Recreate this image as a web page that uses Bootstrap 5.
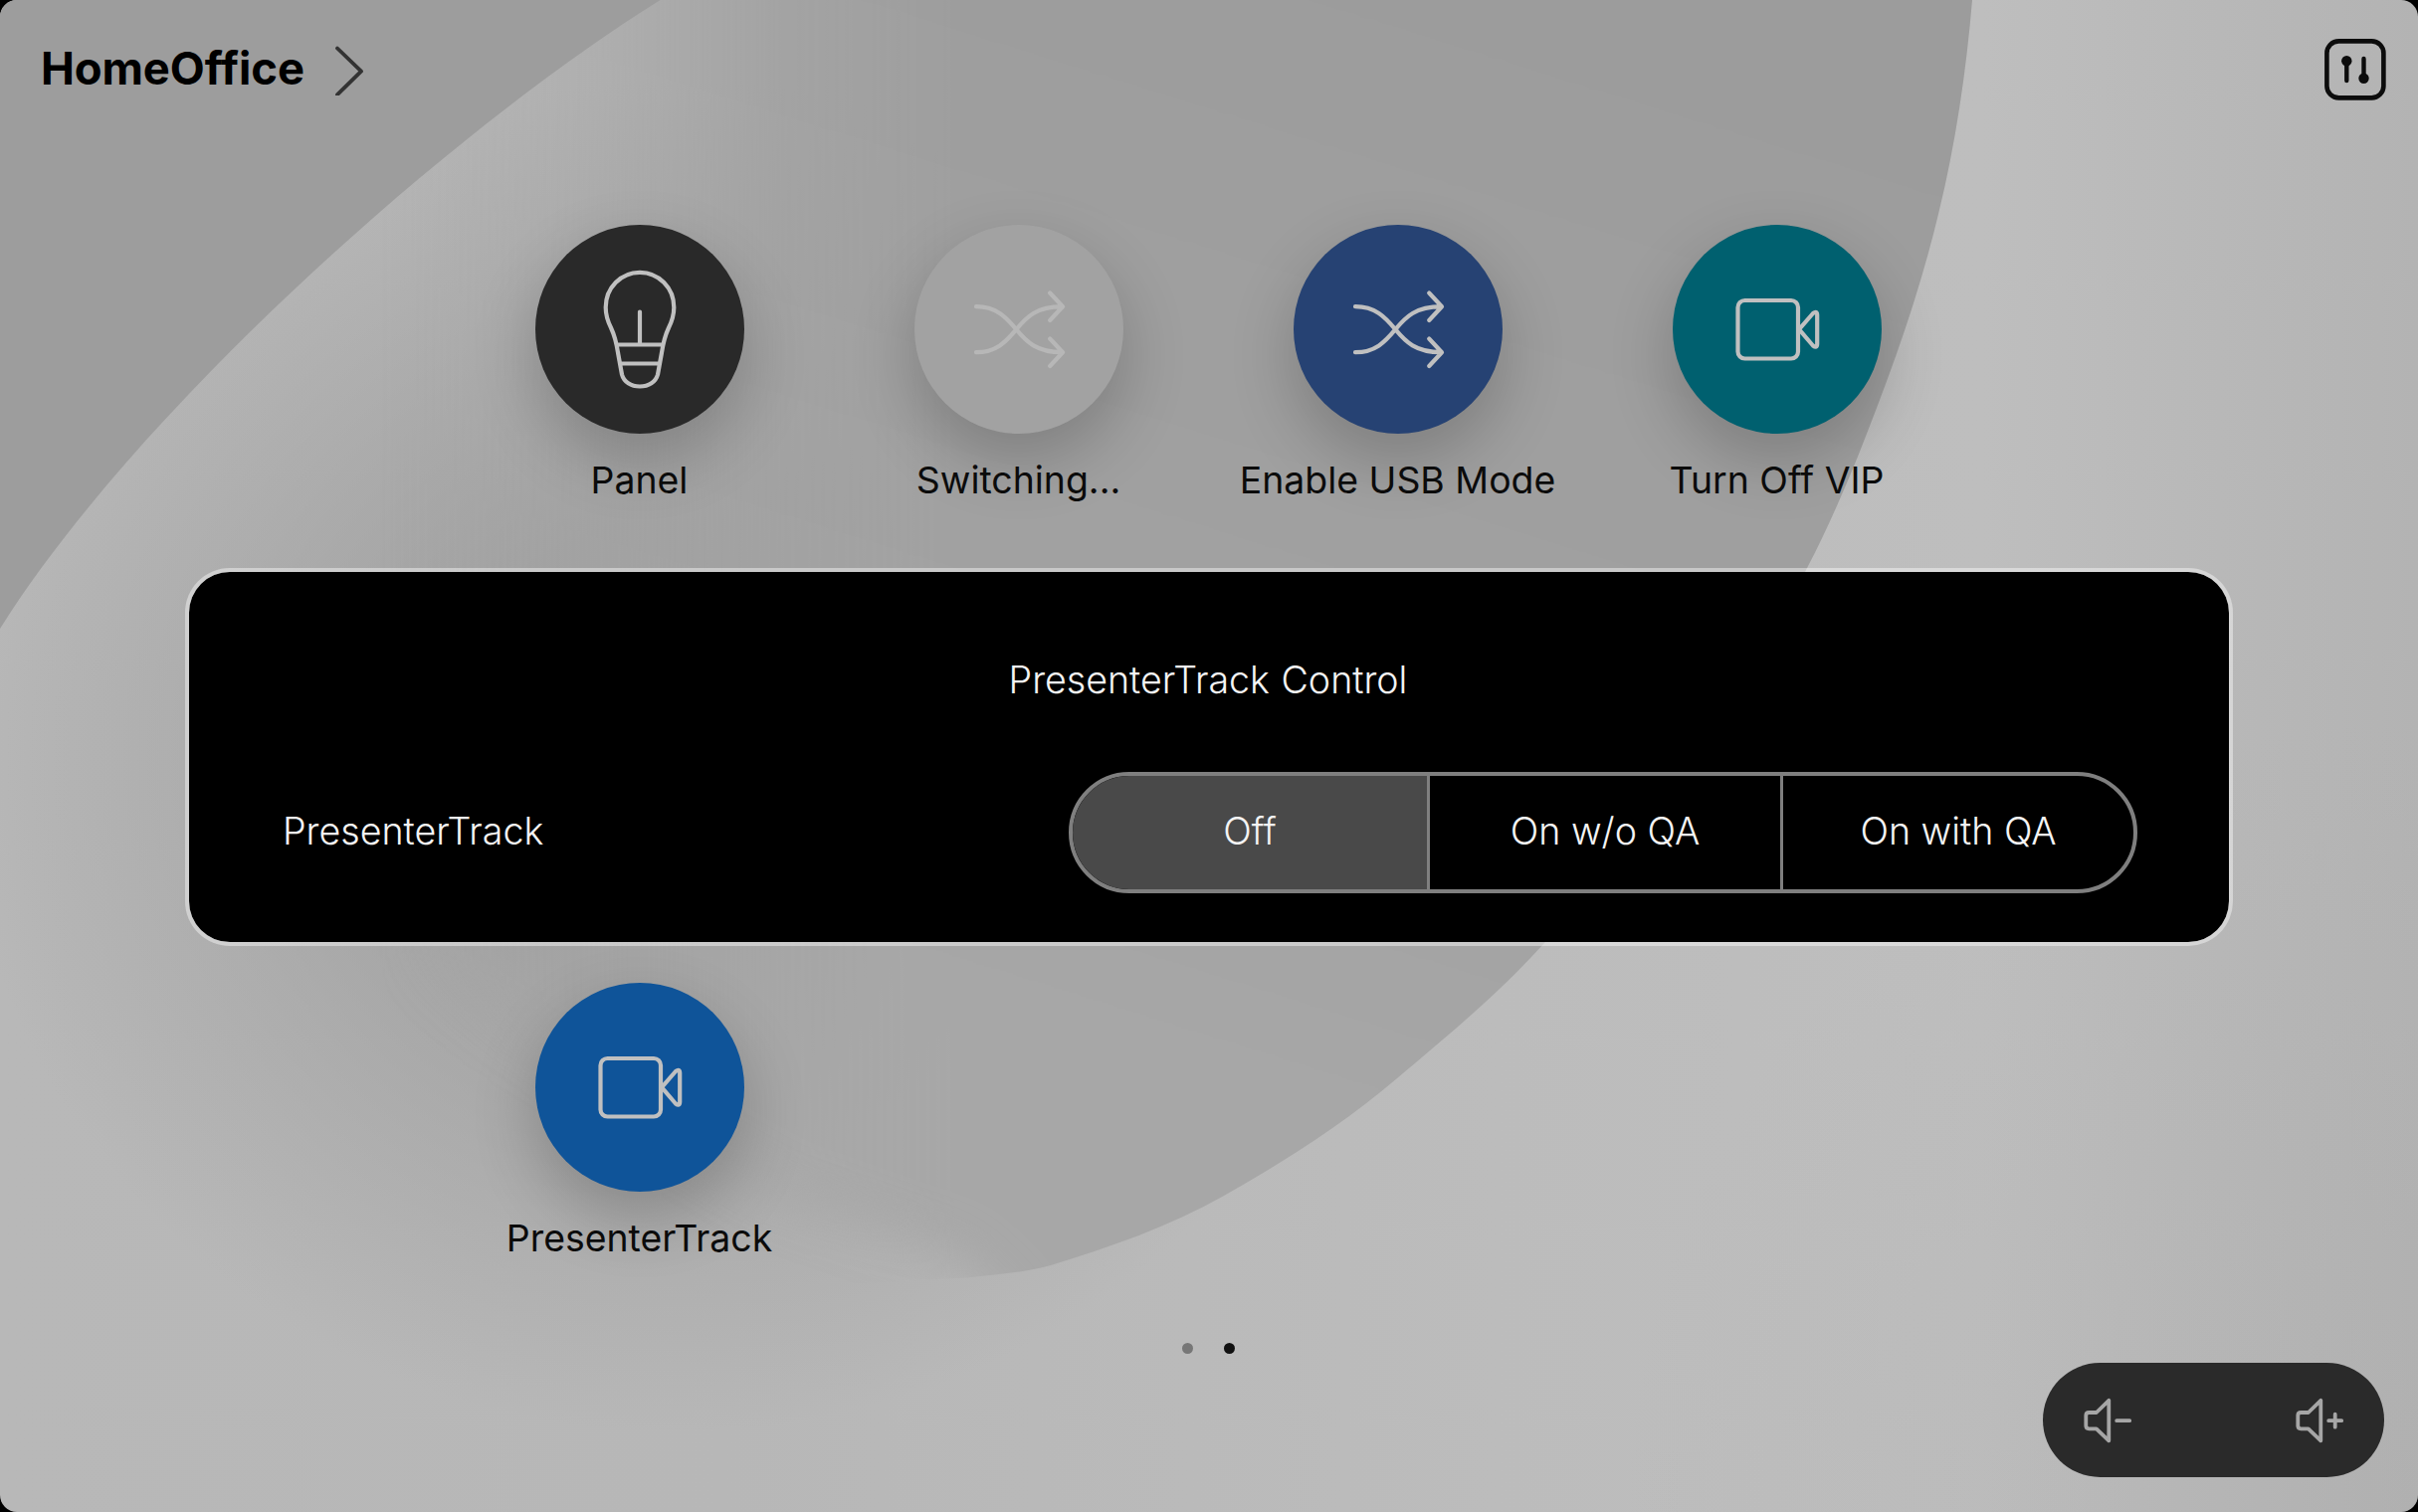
<!DOCTYPE html>
<html lang="en">
<head>
<meta charset="utf-8">
<meta name="viewport" content="width=device-width, initial-scale=1">
<title>HomeOffice</title>
<link href="https://cdn.jsdelivr.net/npm/bootstrap@5.3.0/dist/css/bootstrap.min.css" rel="stylesheet">
<style>
  html, body { height: 100%; margin: 0; background: #000; overflow: hidden; }
  body { font-family: Inter, "Liberation Sans", sans-serif; font-size: 37.6px; line-height: 46px; color: #0b0b0b; }
  .screen { width: 2430px; height: 1520px; border-radius: 17px; }
  .wallpaper { inset: 0; z-index: 0; }
  .topbar { height: 226px; padding: 39px 32px 0 41px; z-index: 1; }
  .room-name { font-size: 45.4px; line-height: 60px; font-weight: 700; color: #000; letter-spacing: -.1px; }
  .room-link { gap: 30px; }
  .apps { display: grid; grid-template-columns: repeat(4, 381px); grid-template-rows: repeat(3, 381px); height: 1124px; padding-right: 2px; z-index: 1; }
  .app-disc { width: 210px; height: 210px; box-shadow: 0 26px 64px 2px rgba(0, 0, 0, .2); color: #c0c0c0; }
  .app-label { margin-top: 24px; white-space: nowrap; font-size: 37.4px; }
  .last-row { grid-row: 3; }
  .disc-panel { background: #292929; }
  .disc-switching { background: #a2a2a2; color: #b7b7b7; }
  .disc-usb { background: #264273; }
  .disc-vip { background: #00606f; }
  .disc-track { background: #0f5499; }
  .stroke-icon { fill: none; stroke: currentColor; stroke-linecap: round; stroke-linejoin: round; display: block; }
  .pager { gap: 31px; padding-right: 2px; z-index: 1; }
  .pager-dot { width: 11px; height: 11px; background: #777; }
  .pager-dot.current { background: #111; }
  .control-panel { left: 186px; top: 571px; width: 2058px; height: 380px; padding: 86px 92px 0 94px;
    background: #000; background-clip: padding-box; border: 4px solid rgba(255, 255, 255, .42); border-radius: 45px;
    color: #f4f4f4; font-weight: 300; word-spacing: 1px; z-index: 3; }
  .control-title { padding-right: 4px; }
  .control-row { margin-top: 69px; }
  .control-name { padding-bottom: 3px; }
  .segments { width: 1074px; height: 122px; border: 4px solid #7f7f7f; border-radius: 61px; overflow: hidden; }
  .segments .btn { font-family: inherit; font-size: inherit; line-height: inherit; font-weight: 300; color: #f4f4f4;
    border: 0; border-radius: 0; padding: 0 0 3px; flex: 0 0 355px; margin-left: 0 !important; background: transparent; }
  .segments .btn + .btn { border-left: 3px solid #7f7f7f; }
  .segments .btn.active { background: #494949; color: #f4f4f4; flex-basis: 356px; }
  .volume { right: 34px; bottom: 35px; width: 343px; height: 115px; background: #2a2a2a; color: #a6a6a6; z-index: 2; padding: 0 39px; }
</style>
</head>
<body>
<div class="screen position-relative overflow-hidden d-flex flex-column">

  <svg class="wallpaper position-absolute" width="2430" height="1520" viewBox="0 0 2430 1520" aria-hidden="true">
    <defs>
      <linearGradient id="light" x1="0" y1="0" x2="2430" y2="0" gradientUnits="userSpaceOnUse">
        <stop offset="0" stop-color="#b8b8b8"/>
        <stop offset=".3" stop-color="#b7b7b7"/>
        <stop offset=".62" stop-color="#bcbcbc"/>
        <stop offset=".82" stop-color="#bebebe"/>
        <stop offset="1" stop-color="#b3b3b3"/>
      </linearGradient>
      <linearGradient id="inner" x1="1500" y1="0" x2="1100" y2="1280" gradientUnits="userSpaceOnUse">
        <stop offset="0" stop-color="#9c9c9c"/>
        <stop offset=".5" stop-color="#a1a1a1"/>
        <stop offset=".85" stop-color="#a7a7a7"/>
        <stop offset="1" stop-color="#a7a7a7"/>
      </linearGradient>
      <radialGradient id="shade" cx="0" cy="0" r="1" gradientUnits="userSpaceOnUse" gradientTransform="translate(680 760) scale(720 680)">
        <stop offset="0" stop-color="#9a9a9a" stop-opacity=".85"/>
        <stop offset=".35" stop-color="#9a9a9a" stop-opacity=".7"/>
        <stop offset=".7" stop-color="#9a9a9a" stop-opacity=".32"/>
        <stop offset="1" stop-color="#9a9a9a" stop-opacity="0"/>
      </radialGradient>
      <radialGradient id="corner" cx="2430" cy="1520" r="800" gradientUnits="userSpaceOnUse">
        <stop offset="0" stop-color="#a8a8a8" stop-opacity=".25"/>
        <stop offset="1" stop-color="#a8a8a8" stop-opacity="0"/>
      </radialGradient>
      <linearGradient id="ramp" x1="380" y1="0" x2="960" y2="0" gradientUnits="userSpaceOnUse">
        <stop offset="0" stop-color="#fff" stop-opacity="0"/>
        <stop offset=".35" stop-color="#fff" stop-opacity=".3"/>
        <stop offset=".7" stop-color="#fff" stop-opacity=".8"/>
        <stop offset="1" stop-color="#fff"/>
      </linearGradient>
      <mask id="rampMask" maskUnits="userSpaceOnUse" x="0" y="0" width="2430" height="1520"><rect width="2430" height="1520" fill="url(#ramp)"/></mask>
      <filter id="tight" filterUnits="userSpaceOnUse" x="0" y="-300" width="2800" height="1900"><feGaussianBlur stdDeviation="24"/></filter>
      <clipPath id="petal">
        <path d="M1982 0C1976 72 1965 145 1949 211C1928 300 1899 378 1867 459C1851 498 1835 535 1815 573C1750 700 1660 823 1552 948C1505 1000 1456 1040 1404 1084C1350 1130 1295 1165 1230 1202C1175 1233 1115 1254 1056 1272C1030 1279 1003 1281 977 1284L700 1300L0 1400L0 0Z"/>
      </clipPath>
    </defs>
    <rect width="2430" height="1520" fill="url(#light)"/>
    <rect width="2430" height="1520" fill="url(#corner)"/>
    <rect width="2430" height="1520" fill="url(#shade)"/>
    <g clip-path="url(#petal)">
      <g mask="url(#rampMask)">
        <path d="M200 -200H2600V1520H1100L1010 1310L960 1262L880 1235L780 1200L640 1120L200 850Z" fill="url(#inner)" filter="url(#tight)"/>
      </g>
    </g>
    <path d="M663.5 0C440 140 132 421 0 632V0Z" fill="#9d9d9d"/>
  </svg>

  <header class="topbar position-relative d-flex align-items-start justify-content-between">
    <div class="room-link d-flex align-items-center">
      <div class="room-name">HomeOffice</div>
      <svg class="stroke-icon" width="30" height="54" viewBox="0 0 30 54" stroke-width="3.8" style="color:#333"><path d="M3 6.500l24 23.200L3 53.200"/></svg>
    </div>
    <svg width="62" height="62" viewBox="0 0 62 62" fill="none" stroke="#0c0c0c" stroke-linecap="round">
      <rect x="2.4" y="2.4" width="57" height="57" rx="12" stroke-width="4.6"/>
      <path d="M22.300 24v18M39.500 20v18" stroke-width="4.4"/>
      <circle cx="22.3" cy="22.3" r="5.2" fill="#0c0c0c" stroke="none"/>
      <circle cx="39.5" cy="39.8" r="5.2" fill="#0c0c0c" stroke="none"/>
    </svg>
  </header>

  <main class="apps position-relative justify-content-center">
    <div class="d-flex flex-column align-items-center">
      <div class="app-disc disc-panel rounded-circle">
        <svg class="stroke-icon" width="210" height="210" viewBox="0 0 210 210" stroke-width="4.2"><path d="M105 47.800c-19 0-34.300 15.500-34.300 35.200c0 8 2.300 14.500 5.300 20.500c4 8.500 5.500 15 7 25l4 22c2 7.500 9 12 18 12s16-4.500 18-12l4-22c1.500-10 3-16.500 7-25c3-6 5.300-12.500 5.300-20.500c0-19.700-15.300-35.200-34.300-35.200z M105 87.500v32.500M82 120.500h46M86 139.500h38"/></svg>
      </div>
      <div class="app-label">Panel</div>
    </div>
    <div class="d-flex flex-column align-items-center">
      <div class="app-disc disc-switching rounded-circle">
        <svg class="stroke-icon" width="210" height="210" viewBox="0 0 210 210" stroke-width="4.2"><path d="M62 82.200c20 0 30 10.500 40.300 23s20.500 23 46 23M62 128.200c20 0 30-10.500 40.300-23s20.500-23 46-23M136.200 68.500l12.800 13.700l-12.800 13.800M136.200 114.500l12.800 13.700l-12.800 13.800"/></svg>
      </div>
      <div class="app-label">Switching...</div>
    </div>
    <div class="d-flex flex-column align-items-center">
      <div class="app-disc disc-usb rounded-circle">
        <svg class="stroke-icon" width="210" height="210" viewBox="0 0 210 210" stroke-width="4.2"><path d="M62 82.200c20 0 30 10.500 40.300 23s20.500 23 46 23M62 128.200c20 0 30-10.500 40.300-23s20.500-23 46-23M136.200 68.500l12.800 13.700l-12.800 13.800M136.200 114.500l12.800 13.700l-12.800 13.800"/></svg>
      </div>
      <div class="app-label">Enable USB Mode</div>
    </div>
    <div class="d-flex flex-column align-items-center">
      <div class="app-disc disc-vip rounded-circle">
        <svg class="stroke-icon" width="210" height="210" viewBox="0 0 210 210" stroke-width="4.2"><rect x="65.500" y="76" width="60.500" height="58.500" rx="7"/><path d="M127 105.200l14-16.200q4-3 4.200 1.500v29.500q-.2 4.500-4.200 1.500z"/></svg>
      </div>
      <div class="app-label">Turn Off VIP</div>
    </div>
    <div class="last-row d-flex flex-column align-items-center">
      <div class="app-disc disc-track rounded-circle">
        <svg class="stroke-icon" width="210" height="210" viewBox="0 0 210 210" stroke-width="4.2"><rect x="65.500" y="76" width="60.500" height="58.500" rx="7"/><path d="M127 105.200l14-16.200q4-3 4.200 1.500v29.500q-.2 4.500-4.200 1.500z"/></svg>
      </div>
      <div class="app-label">PresenterTrack</div>
    </div>
  </main>

  <div class="pager position-relative d-flex justify-content-center">
    <span class="pager-dot rounded-circle"></span>
    <span class="pager-dot current rounded-circle"></span>
  </div>

  <section class="control-panel position-absolute">
    <div class="control-title text-center">PresenterTrack Control</div>
    <div class="control-row d-flex align-items-center justify-content-between">
      <div class="control-name">PresenterTrack</div>
      <div class="segments btn-group" role="group" aria-label="PresenterTrack">
        <button type="button" class="btn active">Off</button>
        <button type="button" class="btn">On w/o QA</button>
        <button type="button" class="btn">On with QA</button>
      </div>
    </div>
  </section>

  <div class="volume position-absolute rounded-pill d-flex align-items-center justify-content-between">
    <svg class="stroke-icon" width="52" height="50" viewBox="0 0 52 50" stroke-width="3.8"><path d="M27.300 4.800v40.500l-12.500-12h-7.500q-3 0-3-3v-10.300q0-3 3-3h7.500zM35.200 25.200h13"/></svg>
    <svg class="stroke-icon" width="52" height="50" viewBox="0 0 52 50" stroke-width="3.8"><path d="M27.300 4.800v40.500l-12.500-12h-7.500q-3 0-3-3v-10.300q0-3 3-3h7.500zM35.200 25.200h13M41.700 18.700v13"/></svg>
  </div>
</div>
<script src="https://cdn.jsdelivr.net/npm/bootstrap@5.3.0/dist/js/bootstrap.bundle.min.js"></script>
</body>
</html>
